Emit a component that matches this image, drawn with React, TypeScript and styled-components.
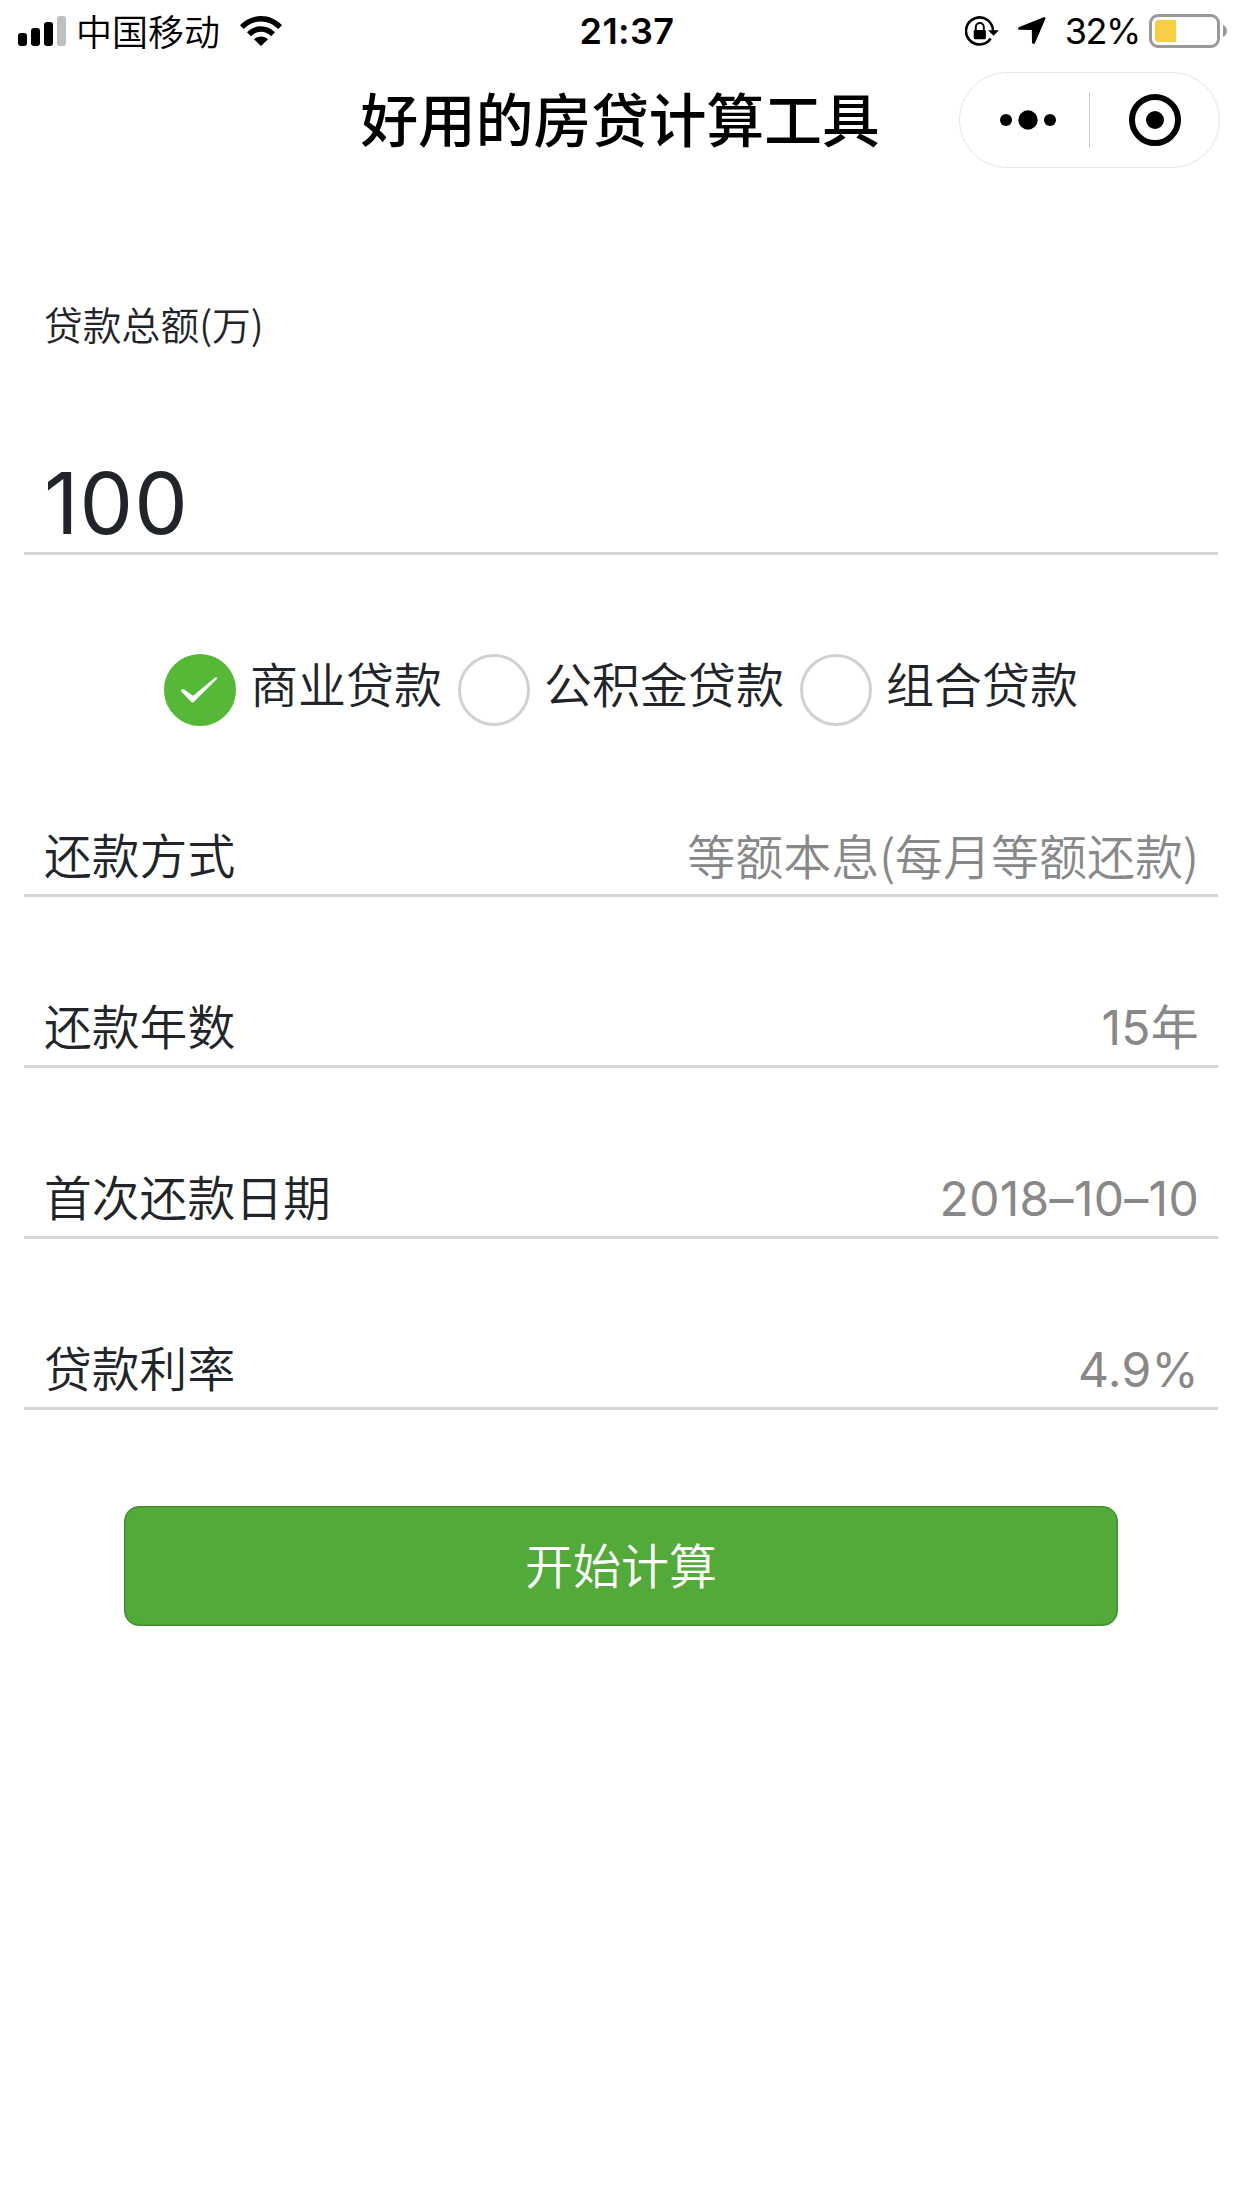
import React, { useState } from "react";
import styled, { createGlobalStyle } from "styled-components";

const CJK = `"Noto Sans CJK SC", "Noto Sans", sans-serif`;
const LATIN = `Inter, "Noto Sans CJK SC", sans-serif`;

const GlobalStyle = createGlobalStyle`
  * { box-sizing: border-box; }
  body {
    margin: 0;
    background: #fff;
    color: #212529;
    font-family: ${CJK};
    font-weight: 350;
  }
`;

const Page = styled.div`
  display: flex;
  flex-direction: column;
  width: 1242px;
  min-height: 2208px;
  background: #fff;
`;

const StatusBar = styled.div`
  display: grid;
  grid-template-columns: 1fr auto 1fr;
  align-items: center;
  height: 60px;
  padding: 0 14px 0 18px;
  color: #000;
`;

const StatusGroup = styled.div<{ $end?: boolean }>`
  display: flex;
  align-items: center;
  justify-content: ${(p) => (p.$end ? "flex-end" : "flex-start")};
  height: 60px;
  svg { display: block; flex: none; }
`;

const Carrier = styled.span`
  margin: 0 20px 2px 9px;
  font-size: 36px;
  line-height: 56px;
`;

const Clock = styled.span`
  margin-left: 8px;
  font-family: ${LATIN};
  font-size: 36px;
  line-height: 62px;
  font-weight: 600;
  letter-spacing: 0.4px;
`;

const StatusIcons = styled.span`
  display: flex;
  align-items: center;
  gap: 19px;
`;

const BatteryLevel = styled.span`
  margin: 0 9px 0 19px;
  font-family: ${LATIN};
  font-size: 36px;
  line-height: 60px;
  font-weight: 400;
  letter-spacing: -1.4px;
`;

const NavBar = styled.header`
  display: grid;
  grid-template-columns: 1fr auto 1fr;
  align-items: center;
  height: 120px;
  padding-right: 22px;
  color: #000;
`;

const Title = styled.h1`
  grid-column: 2;
  margin: 0;
  padding: 0 0 6px 20px;
  font-size: 57.7px;
  line-height: 80px;
  font-weight: 500;
`;

const Capsule = styled.div`
  display: flex;
  align-items: center;
  justify-self: end;
  width: 261px;
  height: 96px;
  border: 1px solid #e5e5e5;
  border-radius: 48px;
`;

const CapsuleAction = styled.button<{ $inset?: number }>`
  display: flex;
  flex: none;
  align-items: center;
  justify-content: center;
  width: 129px;
  padding: 0 0 0 ${(p) => p.$inset ?? 0}px;
  border: 0;
  background: none;
  color: #000;
  svg { display: block; }
`;

const CapsuleDivider = styled.span`
  width: 1px;
  height: 56px;
  background: #ccc;
`;

const Form = styled.main`
  display: flex;
  flex-direction: column;
  padding: 0 24px;
`;

const AmountField = styled.section`
  display: flex;
  flex-direction: column;
  height: 375px;
  padding: 115px 20px 0;
  border-bottom: 3px solid #d4d5d5;
`;

const AmountLabel = styled.label`
  font-size: 38.8px;
  line-height: 56px;
`;

const AmountValue = styled.div`
  margin-top: 103px;
  font-family: ${LATIN};
  font-size: 85px;
  line-height: 100px;
  font-weight: 400;
  letter-spacing: 1px;
`;

const LoanTypes = styled.section`
  display: flex;
  align-items: flex-end;
  justify-content: center;
  gap: 16px;
  height: 171px;
`;

const LoanType = styled.button`
  display: flex;
  align-items: flex-end;
  gap: 14px;
  padding: 0;
  border: 0;
  background: none;
  color: inherit;
  font: inherit;
`;

const RadioMark = styled.span<{ $checked: boolean }>`
  display: flex;
  align-items: center;
  justify-content: center;
  width: 72px;
  height: 72px;
  padding-right: 2px;
  border: 3px solid ${(p) => (p.$checked ? "#56b837" : "#d1d1d1")};
  border-radius: 50%;
  background: ${(p) => (p.$checked ? "#56b837" : "#fff")};
`;

const LoanTypeName = styled.span`
  margin-bottom: 8px;
  font-size: 48px;
  line-height: 72px;
`;

const Row = styled.div`
  display: flex;
  align-items: flex-end;
  justify-content: space-between;
  height: 171px;
  padding: 0 19px 4px 20px;
  border-bottom: 3px solid #d5d5d5;
`;

const RowLabel = styled.span`
  font-size: 47.8px;
  line-height: 72px;
`;

const RowValue = styled.span<{ $numeric?: boolean }>`
  margin-bottom: ${(p) => (p.$numeric ? -3 : 0)}px;
  font-family: ${(p) => (p.$numeric ? LATIN : CJK)};
  font-size: 48px;
  line-height: 72px;
  font-weight: ${(p) => (p.$numeric ? 370 : 350)};
  letter-spacing: ${(p) => (p.$numeric ? 0.3 : 0)}px;
  font-feature-settings: "calt" 0;
  color: #888;
`;

const Submit = styled.button`
  height: 120px;
  margin: 96px 100px 0;
  padding: 0 0 7px;
  border: 1px solid #418b2c;
  border-radius: 15px;
  background: #52aa38;
  box-shadow: inset 0 0 0 1px #4a9b32;
  color: #fff;
  font: inherit;
  font-size: 48px;
  line-height: 72px;
`;

const SignalIcon = () => (
  <svg width="49" height="30" viewBox="0 0 49 30">
    <rect x="0" y="17" width="9" height="13" rx="3" />
    <rect x="13" y="12" width="9" height="18" rx="3" />
    <rect x="26" y="6" width="9" height="24" rx="3" />
    <rect x="39" y="0" width="9" height="30" rx="3" fill="#bfbfbf" />
  </svg>
);

const WifiIcon = () => (
  <svg width="42" height="30" viewBox="0 0 42 30">
    <path d="M0 9.2C5.700 3.300 13 0 21 0s15.300 3.300 21 9.200l-3.800 3.900C33.500 8.300 27.500 5.500 21 5.500S8.500 8.300 3.800 13.100z" />
    <path d="M7 16.300C10.800 12.400 15.700 10.200 21 10.200s10.200 2.200 14 6.100l-3.900 4C28.300 17.400 24.800 15.800 21 15.800s-7.300 1.600-10.100 4.500z" />
    <path d="M14 23.300c2-1.900 4.400-2.800 7-2.800s5 .9 7 2.800L21 30z" />
  </svg>
);

const RotationLockIcon = () => (
  <svg width="34" height="30" viewBox="0 0 34 30">
    <path d="M25.700 22.500A13.500 13.500 0 1 1 28 15" fill="none" stroke="#000" strokeWidth="2.600" />
    <path d="M23 14.200h11l-5.500 5.600z" />
    <rect x="8.700" y="14" width="12.200" height="9.200" rx="1.200" />
    <path d="M10.800 14.500V11a4 4 0 0 1 8 0v3.500" fill="none" stroke="#000" strokeWidth="1.900" />
  </svg>
);

const LocationIcon = () => (
  <svg width="28" height="28" viewBox="0 0 28 28">
    <path d="M25.700.3 1.200 9.900C-.5 10.600-.3 12.700 1.500 12.700l12.300.2.200 12.400c0 2 2.300 2.300 3 .6L27.300 2C27.800.7 27-.2 25.700.3z" />
  </svg>
);

const BatteryIcon = () => (
  <svg width="79" height="34" viewBox="0 0 79 34">
    <rect x="1.500" y="1.500" width="68" height="31" rx="7.500" fill="none" stroke="#999" strokeWidth="3" />
    <path d="M9.500 6H27v22H9.500A3.500 3.500 0 0 1 6 24.500v-15A3.500 3.500 0 0 1 9.500 6z" fill="#f7ce46" />
    <path d="M74 11c5.300 2 5.300 10 0 12z" fill="#999" />
  </svg>
);

const CheckIcon = () => (
  <svg width="36" height="26" viewBox="0 0 36 26">
    <path d="M.2 13.500c.6-1.700 1.600-2 3-1l8 5.700c.6.400 1 .4 1.600 0L33.900.7c1.300-1 2.700.3 1.700 1.600L13 24.800c-1 1-1.900 1-2.800 0L.9 15.300c-.6-.6-.9-1.200-.7-1.800z" fill="#fff" />
  </svg>
);

const MoreIcon = () => (
  <svg width="56" height="20" viewBox="0 0 56 20">
    <circle cx="6" cy="10" r="6" />
    <circle cx="28" cy="10" r="9.700" />
    <circle cx="50" cy="10" r="6" />
  </svg>
);

const CloseIcon = () => (
  <svg width="52" height="52" viewBox="0 0 52 52">
    <circle cx="26" cy="26" r="23" fill="none" stroke="#000" strokeWidth="6" />
    <circle cx="26" cy="26" r="9" />
  </svg>
);

const loanTypes = ["商业贷款", "公积金贷款", "组合贷款"];

const rows = [
  { label: "还款方式", value: "等额本息(每月等额还款)" },
  { label: "还款年数", value: "15年", numeric: true },
  { label: "首次还款日期", value: "2018–10–10", numeric: true },
  { label: "贷款利率", value: "4.9%", numeric: true },
];

export default function App() {
  const [selected, setSelected] = useState(loanTypes[0]);

  return (
    <Page>
      <GlobalStyle />
      <StatusBar>
        <StatusGroup>
          <SignalIcon />
          <Carrier>中国移动</Carrier>
          <WifiIcon />
        </StatusGroup>
        <Clock>21:37</Clock>
        <StatusGroup $end>
          <StatusIcons>
            <RotationLockIcon />
            <LocationIcon />
          </StatusIcons>
          <BatteryLevel>32%</BatteryLevel>
          <BatteryIcon />
        </StatusGroup>
      </StatusBar>
      <NavBar>
        <Title>好用的房贷计算工具</Title>
        <Capsule>
          <CapsuleAction aria-label="更多" $inset={7}>
            <MoreIcon />
          </CapsuleAction>
          <CapsuleDivider />
          <CapsuleAction aria-label="关闭">
            <CloseIcon />
          </CapsuleAction>
        </Capsule>
      </NavBar>
      <Form>
        <AmountField>
          <AmountLabel>贷款总额(万)</AmountLabel>
          <AmountValue>100</AmountValue>
        </AmountField>
        <LoanTypes>
          {loanTypes.map((name) => (
            <LoanType key={name} onClick={() => setSelected(name)}>
              <RadioMark $checked={selected === name}>
                {selected === name && <CheckIcon />}
              </RadioMark>
              <LoanTypeName>{name}</LoanTypeName>
            </LoanType>
          ))}
        </LoanTypes>
        {rows.map((row) => (
          <Row key={row.label}>
            <RowLabel>{row.label}</RowLabel>
            <RowValue $numeric={row.numeric}>{row.value}</RowValue>
          </Row>
        ))}
        <Submit>开始计算</Submit>
      </Form>
    </Page>
  );
}
